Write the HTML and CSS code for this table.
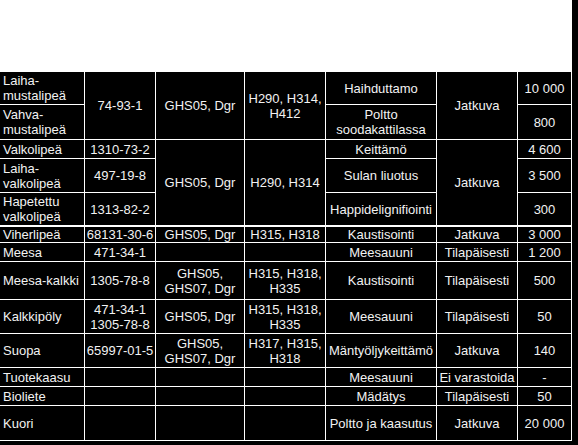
FILE: index.html
```html
<!DOCTYPE html>
<html lang="fi">
<head>
<meta charset="utf-8">
<title>Kemikaalit</title>
<link rel="stylesheet" href="styles.css">
</head>
<body>
<div class="page">
  <div class="main">
    <div class="blank"></div>
    <div class="sheet">
      <table class="chem">
        <colgroup>
          <col class="c1"><col class="c2"><col class="c3"><col class="c4"><col class="c5"><col class="c6"><col class="c7">
        </colgroup>
        <tbody>
          <tr class="r33">
            <td class="name">Laiha-<br>mustalipeä</td>
            <td rowspan="2">74-93-1</td>
            <td rowspan="2">GHS05, Dgr</td>
            <td rowspan="2">H290, H314,<br>H412</td>
            <td>Haihduttamo</td>
            <td rowspan="2">Jatkuva</td>
            <td>10 000</td>
          </tr>
          <tr class="r35">
            <td class="name">Vahva-<br>mustalipeä</td>
            <td>Poltto<br>soodakattilassa</td>
            <td>800</td>
          </tr>
          <tr class="r19">
            <td class="name">Valkolipeä</td>
            <td>1310-73-2</td>
            <td rowspan="3">GHS05, Dgr</td>
            <td rowspan="3">H290, H314</td>
            <td>Keittämö</td>
            <td rowspan="3">Jatkuva</td>
            <td>4 600</td>
          </tr>
          <tr class="r34">
            <td class="name">Laiha-<br>valkolipeä</td>
            <td>497-19-8</td>
            <td>Sulan liuotus</td>
            <td>3 500</td>
          </tr>
          <tr class="r33">
            <td class="name">Hapetettu<br>valkolipeä</td>
            <td>1313-82-2</td>
            <td>Happidelignifiointi</td>
            <td>300</td>
          </tr>
          <tr class="r18 split">
            <td class="name">Viherlipeä</td>
            <td>68131-30-6</td>
            <td>GHS05, Dgr</td>
            <td>H315, H318</td>
            <td>Kaustisointi</td>
            <td>Jatkuva</td>
            <td>3 000</td>
          </tr>
          <tr class="r19">
            <td class="name">Meesa</td>
            <td>471-34-1</td>
            <td></td>
            <td></td>
            <td>Meesauuni</td>
            <td>Tilapäisesti</td>
            <td>1 200</td>
          </tr>
          <tr class="r38">
            <td class="name">Meesa-kalkki</td>
            <td>1305-78-8</td>
            <td>GHS05,<br>GHS07, Dgr</td>
            <td>H315, H318,<br>H335</td>
            <td>Kaustisointi</td>
            <td>Tilapäisesti</td>
            <td>500</td>
          </tr>
          <tr class="r34">
            <td class="name">Kalkkipöly</td>
            <td>471-34-1<br>1305-78-8</td>
            <td>GHS05, Dgr</td>
            <td>H315, H318,<br>H335</td>
            <td>Meesauuni</td>
            <td>Tilapäisesti</td>
            <td>50</td>
          </tr>
          <tr class="r34">
            <td class="name">Suopa</td>
            <td>65997-01-5</td>
            <td>GHS05,<br>GHS07, Dgr</td>
            <td>H317, H315,<br>H318</td>
            <td>Mäntyöljykeittämö</td>
            <td>Jatkuva</td>
            <td>140</td>
          </tr>
          <tr class="r19">
            <td class="name">Tuotekaasu</td>
            <td></td>
            <td></td>
            <td></td>
            <td>Meesauuni</td>
            <td>Ei varastoida</td>
            <td>-</td>
          </tr>
          <tr class="r19">
            <td class="name">Bioliete</td>
            <td></td>
            <td></td>
            <td></td>
            <td>Mädätys</td>
            <td>Tilapäisesti</td>
            <td>50</td>
          </tr>
          <tr class="r35">
            <td class="name">Kuori</td>
            <td></td>
            <td></td>
            <td></td>
            <td>Poltto ja kaasutus</td>
            <td>Jatkuva</td>
            <td>20 000</td>
          </tr>
        </tbody>
      </table>
    </div>
  </div>
  <div class="edge"></div>
</div>
</body>
</html>
```
FILE: styles.css
```css
html, body {
  margin: 0;
  padding: 0;
  background: #fff;
}
.page {
  display: flex;
  width: 578px;
  height: 445px;
  overflow: hidden;
}
.main {
  width: 572px;
  display: flex;
  flex-direction: column;
}
.blank {
  height: 72px;
  background: #fff;
}
.sheet {
  flex: 1;
  background: #000;
}
.edge {
  width: 6px;
  background: #000;
}
.chem {
  width: 572px;
  table-layout: fixed;
  border-collapse: separate;
  border-spacing: 0;
  font-family: "Liberation Sans", Arial, sans-serif;
  font-size: 13px;
  line-height: 15px;
  color: #f2f2f2;
}
.c1 { width: 85px; }
.c2 { width: 71px; }
.c3 { width: 89px; }
.c4 { width: 81px; }
.c5 { width: 111px; }
.c6 { width: 81px; }
.c7 { width: 54px; }
.chem td {
  border-right: 1px solid #fff;
  border-bottom: 1px solid #fff;
  padding: 0 1px;
  text-align: center;
  vertical-align: middle;
  white-space: nowrap;
  overflow: hidden;
}
.chem td.name {
  text-align: left;
  padding-left: 3px;
}
.split td {
  border-top: 1px solid #fff;
}
.r18 { height: 17px; }
.r19 { height: 19px; }
.r33 { height: 33px; }
.r34 { height: 34px; }
.r35 { height: 35px; }
.r38 { height: 38px; }
```
